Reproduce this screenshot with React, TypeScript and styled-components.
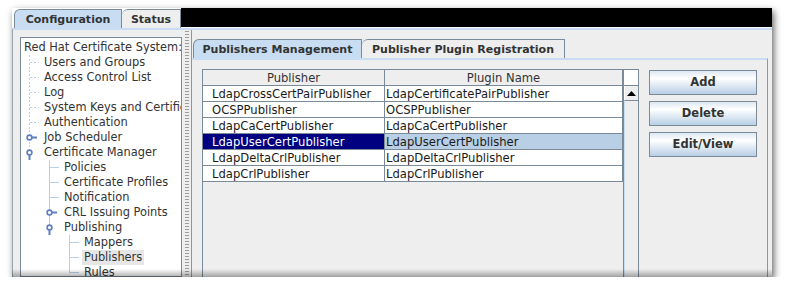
import React from 'react';
import styled, { createGlobalStyle } from 'styled-components';

//
// -- Global

const GlobalStyle = createGlobalStyle`
  html, body {
    margin: 0;
    padding: 0;
    background: #ffffff;
  }

  body {
    font-family: "DejaVu Sans", "Liberation Sans", sans-serif;
    color: #333333;
  }
`;

const LINE = '#b8cfe5';
const GRID = '#7a8a99';

//
// -- Styled Components

const Window = styled.div`
  position: relative;
  margin: 8px 0 0 12px;
  width: 760px;
  height: 269px;
  display: flex;
  flex-direction: column;
  overflow: hidden;
  box-shadow: 2px 3px 7px rgba(0, 0, 0, 0.6);

  &::after {
    content: '';
    position: absolute;
    left: 0;
    right: 0;
    bottom: 0;
    height: 8px;
    background: linear-gradient(rgba(0, 0, 0, 0), rgba(0, 0, 0, 0.32));
    pointer-events: none;
  }
`;

const TabStrip = styled.div<{ $pad: number }>`
  display: flex;
  flex: none;
  height: 20px;
  padding-left: ${(p) => p.$pad}px;
`;

const Tab = styled.div<{ $selected?: boolean; $width: number }>`
  box-sizing: border-box;
  width: ${(p) => p.$width}px;
  height: 20px;
  margin-top: 1px;
  padding-top: 1px;
  border: 1px solid ${GRID};
  border-bottom: none;
  border-left-width: ${(p) => (p.$selected ? 1 : 0)}px;
  border-top-left-radius: 6px;
  background: ${(p) => (p.$selected ? '#c8ddf2' : '#eeeeee')};
  font-size: 11px;
  font-weight: bold;
  color: #333333;
  line-height: 18px;
  text-align: center;
  white-space: nowrap;
`;

const BlackFill = styled.div`
  flex: 1;
  height: 19px;
  background: #000000;
`;

const MainPane = styled.div`
  flex: 1;
  min-height: 0;
  display: flex;
  background: #eeeeee;
  border-top: 2px solid #c8ddf2;
  border-left: 1px solid #9aa5b0;
  padding: 0 4px 0 7px;
`;

const Tree = styled.div`
  box-sizing: border-box;
  width: 162px;
  margin-top: 7px;
  padding: 2px 0 0 3px;
  background: #ffffff;
  border: 1px solid ${GRID};
  overflow: hidden;
  font-size: 11.4px;
  color: #333333;
`;

const TreeRow = styled.div`
  display: flex;
  height: 15px;
  align-items: center;
  white-space: nowrap;
`;

const Indent = styled.div`
  flex: none;
  width: 20px;
  height: 15px;
`;

const Elbow = styled.div<{ $last?: boolean; $dashed?: boolean; $leaf?: boolean }>`
  flex: none;
  width: 20px;
  height: 15px;
  background-image: ${(p) =>
      p.$dashed
        ? `repeating-linear-gradient(to bottom, ${LINE} 0 2px, transparent 2px 4px)`
        : `linear-gradient(${LINE}, ${LINE})`},
    ${(p) =>
      p.$dashed
        ? `repeating-linear-gradient(to right, ${LINE} 0 2px, transparent 2px 4px)`
        : `linear-gradient(${LINE}, ${LINE})`};
  background-repeat: no-repeat;
  background-position: 5px 0, 6px 7px;
  background-size: 1px ${(p) => (p.$last ? 8 : 15)}px,
    ${(p) => (p.$leaf ? 9 : 0)}px 1px;
`;

const Label = styled.span<{ $selected?: boolean }>`
  line-height: 15px;
  margin-left: -2px;
  padding: 0 2px;
  background: ${(p) => (p.$selected ? '#e6e6e6' : 'transparent')};
`;

const Divider = styled.div`
  flex: none;
  width: 4px;
  margin: 0 2px 0 3px;
  background-image: radial-gradient(circle, #9c9c9c 0.7px, transparent 1px);
  background-size: 2px 3px;
`;

const RightSplit = styled.div`
  flex: 1;
  display: flex;
  flex-direction: column;
  padding: 8px 0 0 1px;
  border-left: 1px solid #8196b8;
`;

const TabBody = styled.div`
  flex: 1;
  min-height: 0;
  display: flex;
  align-items: stretch;
  padding: 9px 10px 0 10px;
  border-top: 2px solid #c8ddf2;
  border-right: 1px solid #8196b8;
  margin-left: -1px;
`;

const ScrollPane = styled.div`
  flex: none;
  display: flex;
  width: 437px;
  box-sizing: border-box;
  border: 1px solid ${GRID};
  border-bottom: none;
`;

const Table = styled.div`
  display: grid;
  grid-template-columns: 182px 238px;
  grid-auto-rows: 16px;
  align-content: start;
  width: 420px;
  font-size: 11.6px;
`;

const HeaderCell = styled.div`
  box-sizing: border-box;
  padding-top: 1px;
  border-right: 1px solid ${GRID};
  border-bottom: 1px solid ${GRID};
  background: #eeeeee;
  text-align: center;
  line-height: 15px;
  overflow: hidden;
  color: #333333;
`;

const Cell = styled.div<{ $first?: boolean; $selected?: boolean }>`
  box-sizing: border-box;
  border-right: 1px solid ${GRID};
  border-bottom: 1px solid ${GRID};
  padding: 1px 0 0 ${(p) => (p.$first ? 9 : 1)}px;
  line-height: 15px;
  white-space: nowrap;
  overflow: hidden;
  background: ${(p) =>
    p.$selected ? (p.$first ? '#000080' : '#b8cfe5') : '#ffffff'};
  color: ${(p) => (p.$selected && p.$first ? '#ffffff' : '#1a1a1a')};
`;

const ScrollBar = styled.div`
  flex: none;
  width: 15px;
  display: flex;
  flex-direction: column;
  border-left: 1px solid ${GRID};
  box-sizing: border-box;
`;

const Corner = styled.div`
  height: 16px;
  box-sizing: border-box;
  background: #ffffff;
  border-bottom: 1px solid ${GRID};
`;

const ArrowButton = styled.div`
  height: 15px;
  box-sizing: border-box;
  display: flex;
  align-items: center;
  justify-content: center;
  background: #eeeeee;
  border-left: 1px solid #ffffff;
  border-bottom: 1px solid ${GRID};
`;

const Track = styled.div`
  flex: 1;
  background: #eeeeee;
  border-left: 1px solid #c8ddf2;
`;

const ButtonColumn = styled.div`
  display: flex;
  flex-direction: column;
  gap: 6px;
  width: 108px;
  margin: 1px 0 0 10px;
`;

const ActionButton = styled.div`
  box-sizing: border-box;
  height: 25px;
  border: 1px solid ${GRID};
  background: linear-gradient(#dde8f3 0%, #ffffff 32%, #b8cfe5 100%);
  font-size: 11.5px;
  font-weight: bold;
  color: #333333;
  line-height: 23px;
  text-align: center;
`;

//
// -- Data

type TreeNode = {
  label: string;
  level: number;
  kind?: 'open' | 'closed';
  last?: boolean;
  selected?: boolean;
};

const treeData: TreeNode[] = [
  { label: 'Red Hat Certificate System:', level: 0 },
  { label: 'Users and Groups', level: 1 },
  { label: 'Access Control List', level: 1 },
  { label: 'Log', level: 1 },
  { label: 'System Keys and Certificates', level: 1 },
  { label: 'Authentication', level: 1 },
  { label: 'Job Scheduler', level: 1, kind: 'closed' },
  { label: 'Certificate Manager', level: 1, kind: 'open', last: true },
  { label: 'Policies', level: 2 },
  { label: 'Certificate Profiles', level: 2 },
  { label: 'Notification', level: 2 },
  { label: 'CRL Issuing Points', level: 2, kind: 'closed' },
  { label: 'Publishing', level: 2, kind: 'open', last: true },
  { label: 'Mappers', level: 3 },
  { label: 'Publishers', level: 3, selected: true },
  { label: 'Rules', level: 3, last: true },
];

const publishers = [
  ['LdapCrossCertPairPublisher', 'LdapCertificatePairPublisher'],
  ['OCSPPublisher', 'OCSPPublisher'],
  ['LdapCaCertPublisher', 'LdapCaCertPublisher'],
  ['LdapUserCertPublisher', 'LdapUserCertPublisher'],
  ['LdapDeltaCrlPublisher', 'LdapDeltaCrlPublisher'],
  ['LdapCrlPublisher', 'LdapCrlPublisher'],
];

const SELECTED_ROW = 3;

//
// -- Icons

const Handle: React.FC<{ open: boolean }> = ({ open }) => (
  <svg width="20" height="15" viewBox="0 0 20 15" style={{ display: 'block' }}>
    {open ? (
      <line x1="5.5" y1="10" x2="5.5" y2="15" stroke="#5f7fbf" strokeWidth="2" />
    ) : (
      <line x1="8" y1="7.5" x2="13" y2="7.5" stroke="#5f7fbf" strokeWidth="2" />
    )}
    <circle cx="5.5" cy="7.5" r="2.4" fill="#ffffff" stroke="#5f7fbf" strokeWidth="1.6" />
  </svg>
);

const UpArrow = () => (
  <svg width="9" height="5" viewBox="0 0 9 5">
    <polygon points="4.5,0 9,5 0,5" fill="#000000" />
  </svg>
);

//
// -- App Component

const App: React.FunctionComponent = () => {
  return (
    <>
      <GlobalStyle />
      <Window>
        <TabStrip $pad={2}>
          <Tab $selected $width={108}>Configuration</Tab>
          <Tab $width={59}>Status</Tab>
          <BlackFill />
        </TabStrip>

        <MainPane>
          <Tree>
            {treeData.map((node) => (
              <TreeRow key={node.label}>
                {Array.from({ length: Math.max(node.level - 1, 0) }).map((_, i) => (
                  <Indent key={i} />
                ))}
                {node.level > 0 && (
                  <Elbow
                    $last={node.last}
                    $dashed={node.level === 1}
                    $leaf={!node.kind}
                  >
                    {node.kind && <Handle open={node.kind === 'open'} />}
                  </Elbow>
                )}
                <Label $selected={node.selected}>{node.label}</Label>
              </TreeRow>
            ))}
          </Tree>

          <Divider />

          <RightSplit>
            <TabStrip $pad={0}>
              <Tab $selected $width={169}>Publishers Management</Tab>
              <Tab $width={203}>Publisher Plugin Registration</Tab>
            </TabStrip>

            <TabBody>
              <ScrollPane>
                <Table>
                  <HeaderCell>Publisher</HeaderCell>
                  <HeaderCell>Plugin Name</HeaderCell>
                  {publishers.map(([name, plugin], i) => (
                    <React.Fragment key={name}>
                      <Cell $first $selected={i === SELECTED_ROW}>{name}</Cell>
                      <Cell $selected={i === SELECTED_ROW}>{plugin}</Cell>
                    </React.Fragment>
                  ))}
                </Table>
                <ScrollBar>
                  <Corner />
                  <ArrowButton>
                    <UpArrow />
                  </ArrowButton>
                  <Track />
                </ScrollBar>
              </ScrollPane>

              <ButtonColumn>
                <ActionButton>Add</ActionButton>
                <ActionButton>Delete</ActionButton>
                <ActionButton>Edit/View</ActionButton>
              </ButtonColumn>
            </TabBody>
          </RightSplit>
        </MainPane>
      </Window>
    </>
  );
};

export default App;
